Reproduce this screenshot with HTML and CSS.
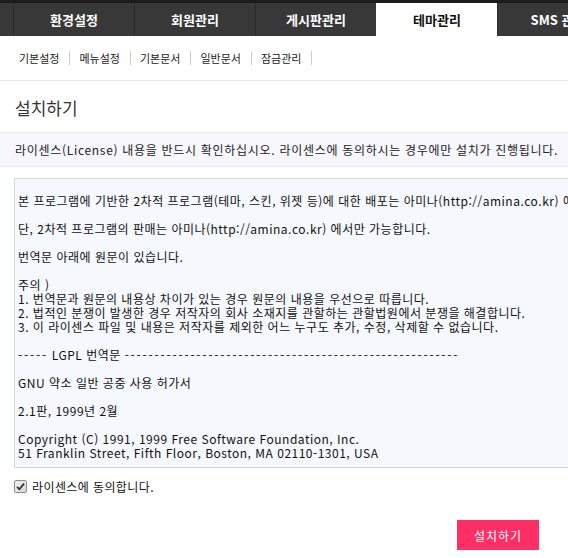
FILE: index.html
```html
<!DOCTYPE html>
<html lang="ko">
<head>
    <meta charset="UTF-8">
    <meta name="viewport" content="width=device-width, initial-scale=1.0">
    <title>테마관리 - 설치하기</title>
    <link rel="stylesheet" href="styles.css">
</head>
<body>
    <!-- 상단 메뉴 -->
    <nav class="top-nav">
        <a href="#">환경설정</a>
        <a href="#">회원관리</a>
        <a href="#">게시판관리</a>
        <a href="#" class="active">테마관리</a>
        <a href="#">SMS 관리</a>
    </nav>

    <!-- 하위 메뉴 -->
    <ul class="sub-nav">
        <li><a href="#">기본설정</a></li>
        <li><a href="#">메뉴설정</a></li>
        <li><a href="#">기본문서</a></li>
        <li><a href="#">일반문서</a></li>
        <li><a href="#">잠금관리</a></li>
    </ul>

    <h2 class="page-title">설치하기</h2>

    <div class="notice">라이센스(License) 내용을 반드시 확인하십시오. 라이센스에 동의하시는 경우에만 설치가 진행됩니다.</div>

    <!-- 라이센스 본문 -->
    <div class="license-box">본 프로그램에 기반한 2차적 프로그램(테마, 스킨, 위젯 등)에 대한 배포는 아미나(http://amina.co.kr) 에서만 가능합니다.

단, 2차적 프로그램의 판매는 아미나(http://amina.co.kr) 에서만 가능합니다.

번역문 아래에 원문이 있습니다.

주의 )
1. 번역문과 원문의 내용상 차이가 있는 경우 원문의 내용을 우선으로 따릅니다.
2. 법적인 분쟁이 발생한 경우 저작자의 회사 소재지를 관할하는 관할법원에서 분쟁을 해결합니다.
3. 이 라이센스 파일 및 내용은 저작자를 제외한 어느 누구도 추가, 수정, 삭제할 수 없습니다.

<span class="dash">-----</span> LGPL 번역문 <span class="dash">--------------------------------------------------------</span>

GNU 약소 일반 공중 사용 허가서

2.1판, 1999년 2월

Copyright (C) 1991, 1999 Free Software Foundation, Inc.
51 Franklin Street, Fifth Floor, Boston, MA 02110-1301, USA

누구든지 본 사용 허가서를 있는 그대로 복제하고 배포할 수 있습니다.</div>

    <label class="agree">
        <input type="checkbox" checked>
        <svg class="check-icon" width="13" height="13" viewBox="0 0 13 13">
            <defs>
                <linearGradient id="cb" x1="0" y1="0" x2="1" y2="1">
                    <stop offset="0" stop-color="#f2f2f2"/>
                    <stop offset="1" stop-color="#d4d4d4"/>
                </linearGradient>
            </defs>
            <rect x="0.5" y="0.5" width="12" height="12" rx="1.5" fill="url(#cb)" stroke="#8f8f8f"/>
            <path d="M3 6.8 L5.4 9.2 L10 3.6" fill="none" stroke="#333" stroke-width="1.8"/>
        </svg>
        <span>라이센스에 동의합니다.</span>
    </label>

    <div class="btn-row">
        <button class="btn-install">설치하기</button>
    </div>
</body>
</html>
```

FILE: styles.css
```css
/* 기본 스타일 */
html, body {
    overflow: hidden;
}

body {
    margin: 0;
    padding: 0;
    font-family: "Noto Sans CJK KR", "Liberation Sans", sans-serif;
    font-size: 12px;
    color: #222;
    background-color: #fff;
}

/* 상단 메뉴 */
.top-nav {
    display: flex;
    height: 33px;
    padding-left: 13px;
    border-top: 3px solid #1c1c1c;
    background-color: #383838;
    white-space: nowrap;
}

.top-nav a {
    flex: none;
    width: 120px;
    border-left: 1px solid #2b2b2b;
    color: #fff;
    font-size: 13px;
    font-weight: bold;
    line-height: 33px;
    text-align: center;
    text-decoration: none;
}

.top-nav a.active {
    background-color: #fff;
    color: #111;
    border-left-color: #fff;
}

/* 하위 메뉴 */
.sub-nav {
    display: flex;
    align-items: center;
    height: 44px;
    margin: 0;
    padding: 0 0 0 19px;
    list-style: none;
    border-bottom: 1px solid #e6e6e6;
}

.sub-nav li {
    display: flex;
    align-items: center;
}

.sub-nav li::after {
    content: "";
    width: 1px;
    height: 14px;
    margin: 0 9px 0 10px;
    background-color: #ccc;
}

.sub-nav a {
    color: #222;
    font-size: 11px;
    text-decoration: none;
}

/* 제목 */
.page-title {
    margin: 0;
    padding: 16px 15px 0;
    height: 35px;
    font-size: 17px;
    font-weight: normal;
    line-height: 22px;
    color: #333;
}

.notice {
    padding: 0 15px;
    height: 33px;
    line-height: 33px;
    letter-spacing: 0.7px;
    background-color: #f7f7fd;
    border-top: 1px solid #e8e8f0;
    border-bottom: 1px solid #e8e8f0;
    white-space: nowrap;
}

/* 라이센스 본문 */
.license-box {
    width: 580px;
    height: 273px;
    margin: 11px 0 0 14px;
    padding: 15px 3px 0;
    border: 1px solid #cfdae0;
    background-color: #f5f8fd;
    color: #111;
    line-height: 14px;
    letter-spacing: 0.5px;
    white-space: pre;
    overflow: hidden;
}

.dash {
    letter-spacing: 1.8px;
}

/* 동의 체크 */
.agree {
    display: flex;
    align-items: center;
    gap: 5px;
    margin: 10px 0 0 14px;
    color: #111;
    letter-spacing: 0.4px;
}

.agree input {
    display: none;
}

.btn-row {
    display: flex;
    justify-content: flex-end;
    padding: 25px 29px 0 0;
}

.btn-install {
    width: 82px;
    height: 30px;
    border: none;
    background-color: #ff2f66;
    color: #fff;
    font-family: inherit;
    font-size: 12px;
    letter-spacing: 1px;
    cursor: pointer;
}
```
